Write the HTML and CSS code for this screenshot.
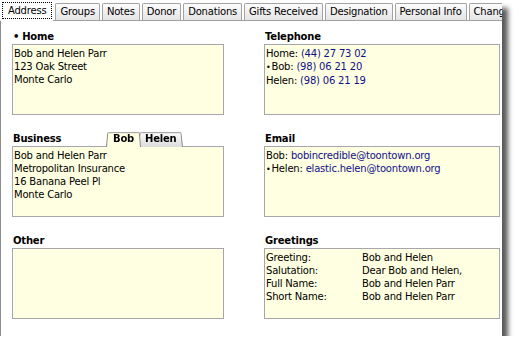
FILE: index.html
```html
<!DOCTYPE html>
<html lang="en">
<head>
    <meta charset="UTF-8">
    <title>Contact - Address</title>
    <link rel="stylesheet" href="styles.css">
</head>
<body>
    <div class="window">
        <div class="tabs">
            <div class="tab active"><span>Address</span></div>
            <div class="tab">Groups</div>
            <div class="tab">Notes</div>
            <div class="tab">Donor</div>
            <div class="tab">Donations</div>
            <div class="tab">Gifts Received</div>
            <div class="tab">Designation</div>
            <div class="tab">Personal Info</div>
            <div class="tab">Changes</div>
        </div>

        <div class="panel">
            <div class="section">
                <div class="label"><span class="dot">•</span>Home</div>
                <div class="box">
                    <div>Bob and Helen Parr</div>
                    <div>123 Oak Street</div>
                    <div>Monte Carlo</div>
                </div>
            </div>

            <div class="section">
                <div class="label">Telephone</div>
                <div class="box">
                    <div>Home: <span class="link">(44) 27 73 02</span></div>
                    <div><span class="bullet">•</span>Bob: <span class="link">(98) 06 21 20</span></div>
                    <div>Helen: <span class="link">(98) 06 21 19</span></div>
                </div>
            </div>

            <div class="section">
                <div class="label">
                    <span class="label-text">Business</span>
                    <div class="subtabs">
                        <div class="subtab selected">Bob</div>
                        <div class="subtab">Helen</div>
                    </div>
                </div>
                <div class="box">
                    <div>Bob and Helen Parr</div>
                    <div>Metropolitan Insurance</div>
                    <div>16 Banana Peel Pl</div>
                    <div>Monte Carlo</div>
                </div>
            </div>

            <div class="section">
                <div class="label">Email</div>
                <div class="box">
                    <div>Bob: <span class="link">bobincredible@toontown.org</span></div>
                    <div><span class="bullet">•</span>Helen: <span class="link">elastic.helen@toontown.org</span></div>
                </div>
            </div>

            <div class="section">
                <div class="label">Other</div>
                <div class="box"></div>
            </div>

            <div class="section">
                <div class="label">Greetings</div>
                <div class="box greetings">
                    <span>Greeting:</span><span>Bob and Helen</span>
                    <span>Salutation:</span><span>Dear Bob and Helen,</span>
                    <span>Full Name:</span><span>Bob and Helen Parr</span>
                    <span>Short Name:</span><span>Bob and Helen Parr</span>
                </div>
            </div>
        </div>
    </div>
</body>
</html>
```

FILE: styles.css
```css
body {
    margin: 0;
    background: #fff;
    font-family: "DejaVu Sans", Verdana, sans-serif;
    font-size: 10px;
    letter-spacing: -0.2px;
    color: #000;
}
.window {
    width: 502px;
    height: 336px;
    background: #fff;
    box-shadow: 6px 8px 5px rgba(0, 0, 0, 0.65);
    display: flex;
    flex-direction: column;
    overflow: hidden;
}
.tabs {
    display: flex;
    align-items: flex-end;
    gap: 2px;
    height: 20px;
    white-space: nowrap;
    position: relative;
    z-index: 1;
}
.tab {
    height: 16px;
    line-height: 16px;
    padding: 0 4px;
    border: 1px solid #a3a3a3;
    border-bottom: none;
    border-radius: 2px 2px 0 0;
    background: linear-gradient(#fdfdfd, #e4e4e4);
    flex-shrink: 0;
}
.tab.active {
    height: 21px;
    margin-bottom: -1px;
    padding: 2px 1px 0 2px;
    border: none;
    background: #fff;
    box-sizing: border-box;
}
.tab.active span {
    display: block;
    height: 17px;
    padding: 0 5px;
    border: 1px dotted #000;
    line-height: 16px;
    box-sizing: border-box;
}
.panel {
    flex: 1;
    border-top: 1px solid #a0a0a0;
    border-left: 1px solid #8c8c8c;
    padding: 9px 0 0 11px;
    display: grid;
    grid-template-columns: 212px 236px;
    grid-auto-rows: 85px;
    column-gap: 40px;
    row-gap: 17px;
}
.label {
    display: flex;
    align-items: flex-end;
    height: 14px;
    line-height: 14px;
    padding-left: 1px;
    font-weight: bold;
}
.dot {
    margin-right: 3px;
}
.label-text {
    width: 93px;
}
.subtabs {
    display: flex;
    align-items: flex-end;
    margin-bottom: -1px;
}
.subtab {
    position: relative;
    z-index: 0;
    height: 16px;
    line-height: 16px;
    padding: 0 7px;
}
.subtab::before {
    content: "";
    position: absolute;
    inset: 0;
    z-index: -1;
    border: 1px solid #8a8a8a;
    border-bottom: none;
    border-radius: 2px 2px 0 0;
    background: linear-gradient(#fafafa, #dcdcdc);
    transform: perspective(24px) rotateX(7deg);
    transform-origin: bottom;
}
.subtab.selected {
    z-index: 2;
}
.subtab.selected::before {
    background: #ffffe1;
}
.subtab + .subtab {
    margin-left: -3px;
    z-index: 1;
}
.box {
    height: 71px;
    box-sizing: border-box;
    border: 1px solid #a7a6ae;
    background: #ffffe1;
    padding: 2px 1px;
    line-height: 13px;
    white-space: nowrap;
}
.link {
    color: #10108a;
}
.bullet {
    font-size: 8px;
    margin-right: 1px;
}
.greetings {
    display: grid;
    grid-template-columns: 96px auto;
    align-content: start;
}
```
